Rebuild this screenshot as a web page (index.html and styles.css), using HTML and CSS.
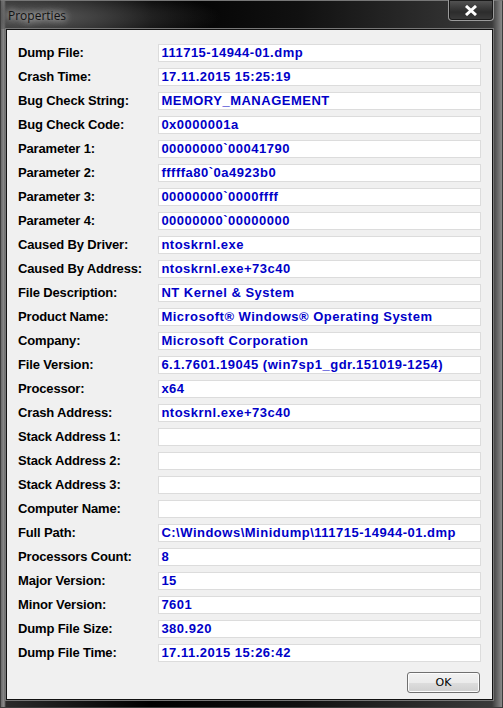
FILE: index.html
```html
<!DOCTYPE html>
<html lang="en">
<head>
  <meta charset="UTF-8" />
  <title>Properties</title>
  <link rel="stylesheet" href="styles.css">
</head>
<body>

  <div class="window">
    <div class="titlebar">
      <span class="title">Properties</span>
      <div class="close">
        <svg width="14" height="11" viewBox="0 0 14 11">
          <path d="M2 1 L12 10 M12 1 L2 10" stroke="#fff" stroke-width="3" />
        </svg>
      </div>
    </div>

    <div class="client">
      <div class="props" id="props"></div>
      <div class="buttons">
        <button class="btn">OK</button>
      </div>
    </div>
  </div>

  <script>
    const props = [
      ["Dump File:", "111715-14944-01.dmp"],
      ["Crash Time:", "17.11.2015 15:25:19"],
      ["Bug Check String:", "MEMORY_MANAGEMENT"],
      ["Bug Check Code:", "0x0000001a"],
      ["Parameter 1:", "00000000`00041790"],
      ["Parameter 2:", "fffffa80`0a4923b0"],
      ["Parameter 3:", "00000000`0000ffff"],
      ["Parameter 4:", "00000000`00000000"],
      ["Caused By Driver:", "ntoskrnl.exe"],
      ["Caused By Address:", "ntoskrnl.exe+73c40"],
      ["File Description:", "NT Kernel & System"],
      ["Product Name:", "Microsoft® Windows® Operating System"],
      ["Company:", "Microsoft Corporation"],
      ["File Version:", "6.1.7601.19045 (win7sp1_gdr.151019-1254)"],
      ["Processor:", "x64"],
      ["Crash Address:", "ntoskrnl.exe+73c40"],
      ["Stack Address 1:", ""],
      ["Stack Address 2:", ""],
      ["Stack Address 3:", ""],
      ["Computer Name:", ""],
      ["Full Path:", "C:\\Windows\\Minidump\\111715-14944-01.dmp"],
      ["Processors Count:", "8"],
      ["Major Version:", "15"],
      ["Minor Version:", "7601"],
      ["Dump File Size:", "380.920"],
      ["Dump File Time:", "17.11.2015 15:26:42"]
    ];

    const list = document.getElementById('props');
    props.forEach(([name, value]) => {
      const row = document.createElement('div');
      row.className = 'row';
      const label = document.createElement('span');
      label.className = 'label';
      label.textContent = name;
      const field = document.createElement('div');
      field.className = 'field';
      field.textContent = value;
      row.appendChild(label);
      row.appendChild(field);
      list.appendChild(row);
    });
  </script>

</body>
</html>
```

FILE: styles.css
```css
body {
  margin: 0;
  background: #000;
}
.window {
  width: 503px;
  height: 708px;
  box-sizing: border-box;
  padding: 0 9px 7px 5px;
  display: flex;
  flex-direction: column;
  background:
    linear-gradient(to right, #6a6a6a 0, #8c8c8c 3px, #2a2a2a 5px, #000 30%, #111 60%, #3a3a3a 98%, #8a8a8a 100%);
  border: 1px solid #3c3c3c;
  border-top-color: #777;
}
.titlebar {
  height: 28px;
  display: flex;
  justify-content: space-between;
  align-items: flex-start;
  background: radial-gradient(ellipse 180px 30px at 40px 16px, #555 0, transparent 100%);
  margin-left: -5px;
  margin-right: -9px;
  padding-left: 7px;
}
.title {
  font-family: "Open Sans", sans-serif;
  font-size: 12px;
  color: #111;
  margin-top: 6px;
  text-shadow: 0 0 6px #ddd, 0 0 10px #bbb;
}
.close {
  width: 44px;
  height: 20px;
  margin-right: 8px;
  margin-top: -1px;
  border: 1px solid #9a9a9a;
  border-top: none;
  border-radius: 0 0 4px 4px;
  background: linear-gradient(#555, #2c2c2c 60%, #3c3c3c);
  box-shadow: inset 0 0 0 1px #1a1a1a;
  display: flex;
  align-items: center;
  justify-content: center;
}
.client {
  flex: 1;
  background: #f0f0f0;
  border: 1px solid #111;
  box-shadow: 0 0 0 1px #777;
  padding: 14px 11px 0 11px;
  display: flex;
  flex-direction: column;
}
.props {
  display: flex;
  flex-direction: column;
  gap: 6px;
}
.row {
  display: flex;
  align-items: center;
  height: 18px;
}
.label {
  width: 141px;
  padding-bottom: 2px;
  font-family: "Liberation Sans", Arial, sans-serif;
  font-weight: bold;
  font-size: 13px;
  letter-spacing: -0.15px;
  color: #000;
}
.field {
  width: 324px;
  height: 18px;
  box-sizing: border-box;
  background: #fff;
  border: 1px solid #dcdcdc;
  padding: 0 0 0 2px;
  font-family: "Liberation Sans", Arial, sans-serif;
  font-weight: bold;
  font-size: 13px;
  letter-spacing: 0.5px;
  line-height: 15px;
  color: #0000c8;
  white-space: nowrap;
  overflow: hidden;
}
.buttons {
  display: flex;
  justify-content: flex-end;
  margin-top: 10px;
  padding-right: 1px;
}
.btn {
  width: 73px;
  height: 21px;
  font-family: "DejaVu Sans", sans-serif;
  font-size: 11px;
  color: #000;
  border: 1px solid #707070;
  border-radius: 3px;
  background: linear-gradient(#f2f2f2 0, #ebebeb 50%, #dddddd 51%, #cfcfcf 100%);
  box-shadow: inset 0 0 0 1px #fcfcfc;
  padding: 0;
}
```
